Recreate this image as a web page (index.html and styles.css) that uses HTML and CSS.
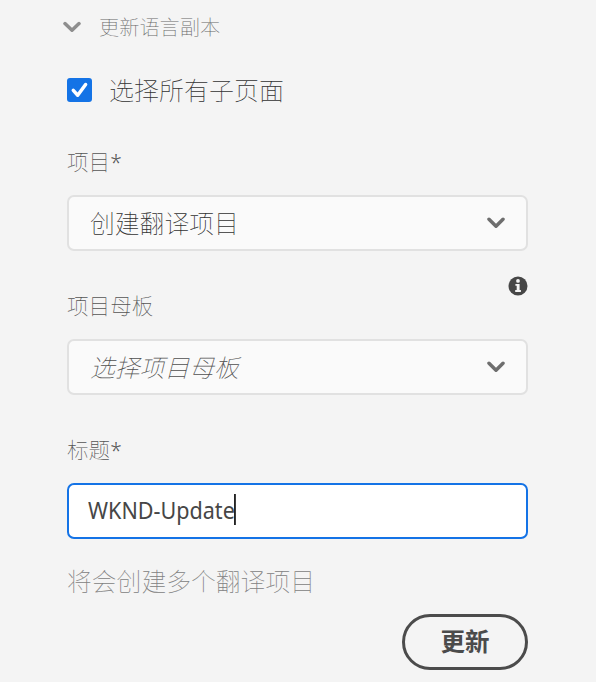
FILE: index.html
```html
<!DOCTYPE html>
<html lang="zh-CN">
<head>
<meta charset="utf-8">
<title>更新语言副本</title>
<link rel="stylesheet" href="styles.css">
</head>
<body>
<main class="panel">
  <h2 class="heading">
    <svg class="chevron heading-chevron" viewBox="0 0 18 12"><path d="M2 2.6 9 9.2 16 2.6"/></svg>
    <span>更新语言副本</span>
  </h2>
  <div class="check-row">
    <span class="checkbox"><svg viewBox="0 0 25 24"><path d="M6.3 12.4 10.7 17.2 18.6 6.5"/></svg></span>
    <span class="check-label">选择所有子页面</span>
  </div>
  <section class="field">
    <div class="label">项目<span class="star">*</span></div>
    <div class="control"><span>创建翻译项目</span><svg class="chevron" viewBox="0 0 18 12"><path d="M2 2.3 9 9.2 16 2.3"/></svg></div>
  </section>
  <section class="field">
    <svg class="info" viewBox="0 0 20 20"><circle cx="10" cy="10" r="9.5"/><path d="M7.4 8h4.2v6.1h1.3v1.8H7.2v-1.8h1.5V9.8H7.4z"/><circle class="dot" cx="10" cy="4.9" r="1.9"/></svg>
    <div class="label">项目母板</div>
    <div class="control"><span class="placeholder">选择项目母板</span><svg class="chevron" viewBox="0 0 18 12"><path d="M2 2.3 9 9.2 16 2.3"/></svg></div>
  </section>
  <section class="field">
    <div class="label">标题<span class="star">*</span></div>
    <div class="control focused"><span class="value">WKND-Update<i class="caret"></i></span></div>
  </section>
  <p class="helper">将会创建多个翻译项目</p>
  <button class="update">更新</button>
</main>
</body>
</html>
```
FILE: styles.css
```css
* { box-sizing: border-box; }
body {
  margin: 0;
  background: #f4f4f4;
  color: #323232;
  font-family: "Noto Sans CJK SC", sans-serif;
  font-weight: 100;
}
.panel {
  display: flex;
  flex-direction: column;
  width: 461px;
  margin-left: 67px;
  height: 682px;
  white-space: nowrap;
}
.heading {
  display: flex;
  align-items: center;
  gap: 18px;
  height: 30px;
  margin: 12px 0 0 -4px;
  font-size: 20.2px;
  font-weight: 100;
  line-height: 30px;
  color: #686868;
}
.chevron {
  width: 18px;
  height: 12px;
  fill: none;
  stroke: #6e6e6e;
  stroke-width: 3.5;
  stroke-linecap: round;
  stroke-linejoin: round;
}
.heading-chevron { stroke: #8e8e8e; }
.check-row {
  display: flex;
  align-items: center;
  gap: 17px;
  height: 36px;
  margin-top: 30px;
}
.checkbox {
  width: 25px;
  height: 24px;
  border-radius: 3px;
  background: #1473e6;
}
.checkbox svg {
  display: block;
  width: 25px;
  height: 24px;
  fill: none;
  stroke: #fff;
  stroke-width: 3.5;
  stroke-linecap: round;
  stroke-linejoin: round;
}
.check-label { font-size: 25px; line-height: 36px; padding-bottom: 3px; }
.field {
  position: relative;
  height: 144px;
}
.check-row + .field { margin-top: 37px; }
.label {
  height: 32px;
  margin-bottom: 18px;
  font-size: 21.6px;
  line-height: 32px;
  color: #555;
}
.star {
  font-family: "Noto Sans", sans-serif;
  font-size: 21px;
  font-weight: 300;
  line-height: 1;
}
.control {
  display: flex;
  align-items: center;
  justify-content: space-between;
  height: 56px;
  padding: 0 21px;
  border: 2px solid #e1e1e1;
  border-radius: 7px;
  background: #fafafa;
  font-size: 24.8px;
  line-height: 36px;
}
.control > span { padding-bottom: 3px; }
.placeholder { font-style: italic; color: #505050; }
.focused {
  justify-content: flex-start;
  padding-left: 19px;
  border-color: #1473e6;
  background: #fff;
}
.value {
  display: flex;
  align-items: center;
  color: #464646;
  font-family: "Noto Sans", sans-serif;
  font-size: 23.2px;
  font-weight: 400;
  transform: scaleX(.93);
  transform-origin: left;
}
.caret {
  width: 2px;
  height: 31px;
  margin: -1px 0 0 -1px;
  background: #222;
}
.info {
  position: absolute;
  top: -13px;
  right: 0;
  width: 20px;
  height: 20px;
  fill: #464646;
}
.info path, .info .dot { fill: #f4f4f4; }
.helper {
  height: 36px;
  margin: -15px 0 0;
  font-size: 24.8px;
  line-height: 36px;
  color: #828282;
}
.update {
  align-self: flex-end;
  width: 126px;
  height: 56px;
  margin-top: 16px;
  padding: 0 0 3px;
  border: 3px solid #4b4b4b;
  border-radius: 28px;
  background: transparent;
  color: #4b4b4b;
  font: 700 24.5px/36px "Noto Sans CJK SC", sans-serif;
}
```
